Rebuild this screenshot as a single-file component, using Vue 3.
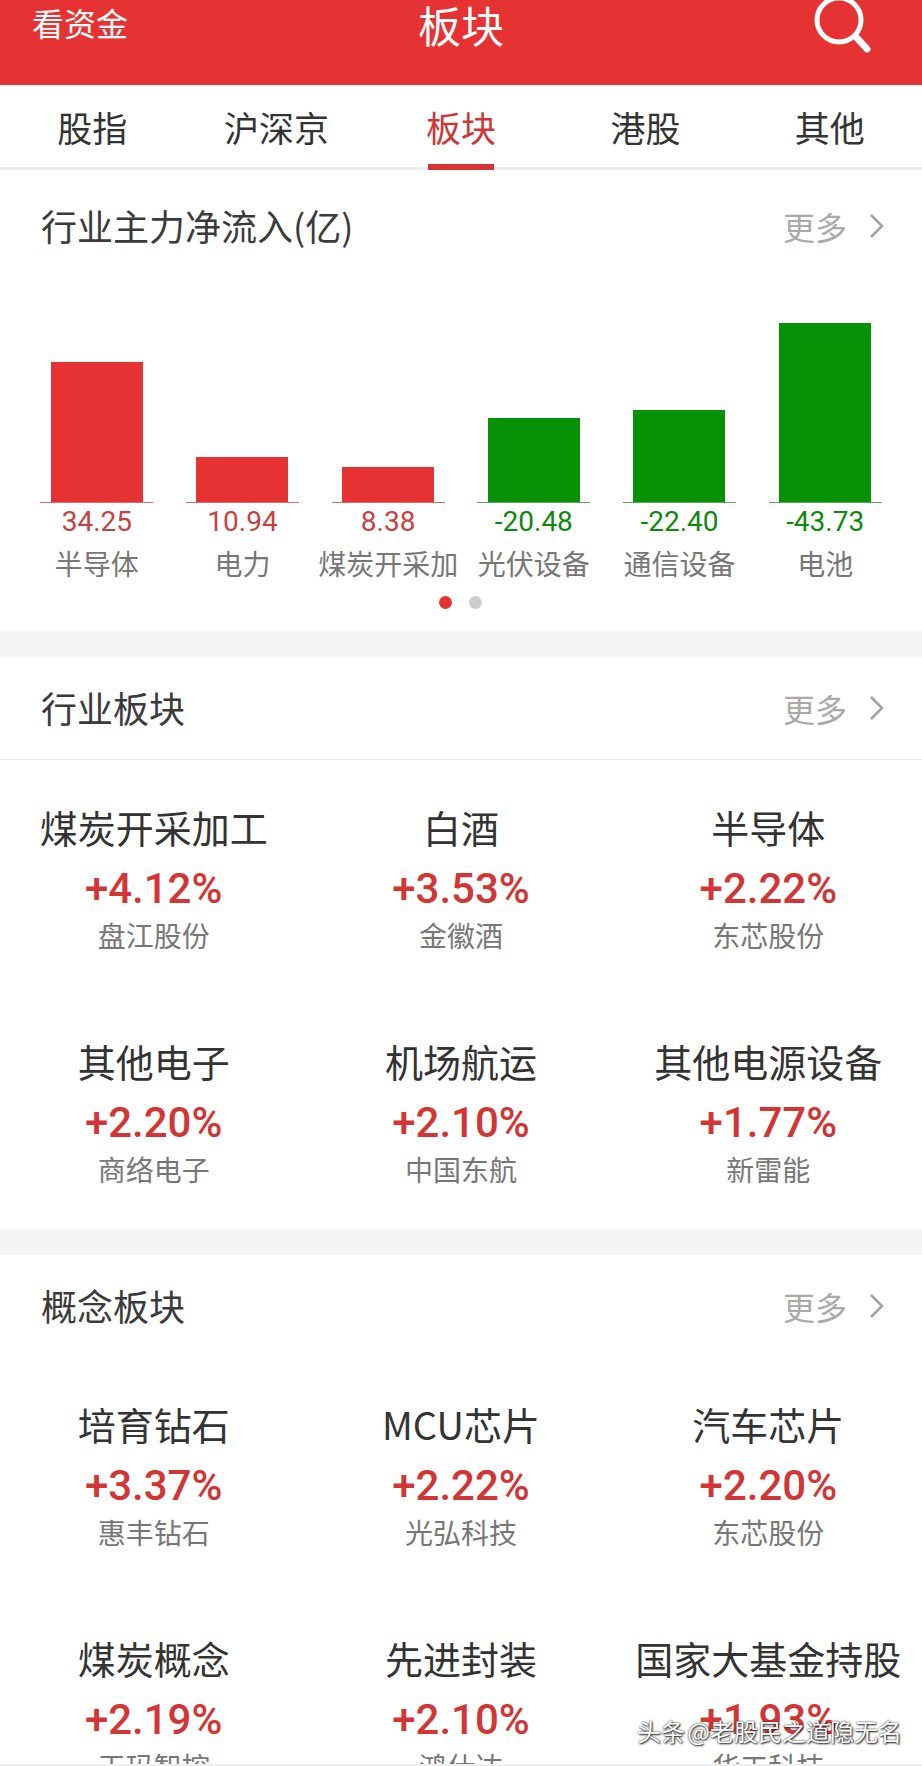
<template>
  <div class="page">
    <header class="top-bar">
      <span class="top-link">看资金</span>
      <span class="top-title">板块</span>
      <svg class="search" viewBox="0 0 56 56" fill="none" stroke="#fff" stroke-linecap="round">
        <circle cx="25" cy="24" r="22" stroke-width="5" />
        <path d="M43 42 L53 53" stroke-width="7" />
      </svg>
    </header>

    <nav class="tabs">
      <div v-for="t in tabs" :key="t" class="tab" :class="{ active: t === '板块' }">{{ t }}</div>
    </nav>

    <section class="section flow-section">
      <div class="sec-head">
        <span class="sec-title">行业主力净流入(亿)</span>
        <span class="more">更多<svg class="chev" viewBox="0 0 15 24" fill="none" stroke="#a3a3a3" stroke-width="2.6"><path d="M2 1 L13 12 L2 23" /></svg></span>
      </div>
      <div class="chart">
        <div v-for="b in flows" :key="b.name" class="col" :class="b.value > 0 ? 'up' : 'down'">
          <div class="bar-area">
            <div class="bar" :style="{ height: b.h + 'px' }"></div>
          </div>
          <div class="val">{{ b.value.toFixed(2) }}</div>
          <div class="col-name">{{ b.name }}</div>
        </div>
      </div>
      <div class="dots">
        <span class="dot on"></span>
        <span class="dot"></span>
      </div>
    </section>

    <section class="section">
      <div class="sec-head ruled">
        <span class="sec-title">行业板块</span>
        <span class="more">更多<svg class="chev" viewBox="0 0 15 24" fill="none" stroke="#a3a3a3" stroke-width="2.6"><path d="M2 1 L13 12 L2 23" /></svg></span>
      </div>
      <div class="grid">
        <div v-for="c in industry" :key="c.name" class="cell">
          <div class="cell-name">{{ c.name }}</div>
          <div class="cell-pct">{{ c.pct }}</div>
          <div class="cell-stock">{{ c.stock }}</div>
        </div>
      </div>
    </section>

    <section class="section">
      <div class="sec-head">
        <span class="sec-title">概念板块</span>
        <span class="more">更多<svg class="chev" viewBox="0 0 15 24" fill="none" stroke="#a3a3a3" stroke-width="2.6"><path d="M2 1 L13 12 L2 23" /></svg></span>
      </div>
      <div class="grid">
        <div v-for="c in concept" :key="c.name" class="cell">
          <div class="cell-name">{{ c.name }}</div>
          <div class="cell-pct">{{ c.pct }}</div>
          <div class="cell-stock">{{ c.stock }}</div>
        </div>
      </div>
    </section>

    <div class="bottom-line"></div>
    <div class="watermark">头条 @老股民之道隐无名</div>
  </div>
</template>

<script setup>
const tabs = ['股指', '沪深京', '板块', '港股', '其他']

const flows = [
  { name: '半导体', value: 34.25, h: 140 },
  { name: '电力', value: 10.94, h: 45 },
  { name: '煤炭开采加', value: 8.38, h: 35 },
  { name: '光伏设备', value: -20.48, h: 84 },
  { name: '通信设备', value: -22.4, h: 92 },
  { name: '电池', value: -43.73, h: 179 }
]

const industry = [
  { name: '煤炭开采加工', pct: '+4.12%', stock: '盘江股份' },
  { name: '白酒', pct: '+3.53%', stock: '金徽酒' },
  { name: '半导体', pct: '+2.22%', stock: '东芯股份' },
  { name: '其他电子', pct: '+2.20%', stock: '商络电子' },
  { name: '机场航运', pct: '+2.10%', stock: '中国东航' },
  { name: '其他电源设备', pct: '+1.77%', stock: '新雷能' }
]

const concept = [
  { name: '培育钻石', pct: '+3.37%', stock: '惠丰钻石' },
  { name: 'MCU芯片', pct: '+2.22%', stock: '光弘科技' },
  { name: '汽车芯片', pct: '+2.20%', stock: '东芯股份' },
  { name: '煤炭概念', pct: '+2.19%', stock: '天玛智控' },
  { name: '先进封装', pct: '+2.10%', stock: '鸿仕达' },
  { name: '国家大基金持股', pct: '+1.93%', stock: '华工科技' }
]
</script>

<style>
html, body {
  margin: 0;
  background: #fff;
}
</style>

<style scoped>
.page {
  position: relative;
  width: 922px;
  height: 1766px;
  overflow: hidden;
  background: #f5f5f5;
  font-family: "Noto Sans CJK SC", "Noto Sans", sans-serif;
  color: #333;
}

.top-bar {
  height: 85px;
  box-sizing: border-box;
  padding: 0 32px 35px;
  background: #e63232;
  color: #fff;
  display: grid;
  grid-template-columns: 1fr auto 1fr;
  align-items: center;
}

.top-link { font-size: 32px; line-height: 50px; margin-top: -9px; }
.top-title { font-size: 43px; line-height: 50px; margin-top: -4px; }

.search {
  width: 56px;
  height: 56px;
  justify-self: end;
  margin-top: -4px;
  margin-right: 20px;
  overflow: visible;
}

.tabs {
  height: 85px;
  box-sizing: border-box;
  background: #fff;
  border-bottom: 3px solid #ededed;
  display: grid;
  grid-template-columns: repeat(5, 1fr);
}

.tab {
  position: relative;
  height: 82px;
  font-size: 35px;
  line-height: 84px;
  text-align: center;
}

.tab.active { color: #d03535; }

.tab.active::after {
  content: '';
  position: absolute;
  left: 50%;
  bottom: -3px;
  width: 66px;
  height: 6px;
  margin-left: -33px;
  background: #d63434;
}

.section {
  background: #fff;
  margin-bottom: 26px;
}

.flow-section { padding-top: 5px; }

.sec-head {
  height: 102px;
  box-sizing: border-box;
  padding: 0 38px 0 41px;
  display: flex;
  align-items: center;
  justify-content: space-between;
}

.sec-head.ruled { border-bottom: 1px solid #eaeaea; height: 103px; }

.sec-title {
  font-size: 36px;
  color: #3a3a3a;
  margin-top: -3px;
}

.more {
  display: flex;
  align-items: center;
  font-size: 32px;
  color: #aaa;
}

.chev {
  width: 15px;
  height: 24px;
  margin-left: 22px;
}

.chart {
  display: grid;
  grid-template-columns: repeat(6, 1fr);
  padding: 0 24px;
}

.col {
  display: flex;
  flex-direction: column;
  align-items: center;
}

.bar-area {
  width: 113px;
  height: 225px;
  display: flex;
  align-items: flex-end;
  justify-content: center;
  border-bottom: 1px solid;
}

.bar { width: 92px; }

.up .bar { background: #e63232; }
.down .bar { background: #069106; }
.up .bar-area { border-color: #d86a6a; }
.down .bar-area { border-color: #5aa85a; }

.val {
  font-family: Roboto, sans-serif;
  font-size: 28px;
  line-height: 38px;
  margin-top: 0;
}

.up .val { color: #c8403f; }
.down .val { color: #0d8a0d; }

.col-name {
  font-size: 28px;
  line-height: 44px;
  margin-top: 0;
  color: #777;
  white-space: nowrap;
}

.dots {
  display: flex;
  justify-content: center;
  gap: 17px;
  height: 13px;
  margin-left: -1px;
  padding: 11px 0 22px;
}

.dot {
  width: 13px;
  height: 13px;
  border-radius: 50%;
  background: #ccc;
}

.dot.on { background: #e63232; }

.grid {
  display: grid;
  grid-template-columns: repeat(3, 1fr);
  row-gap: 83px;
  padding: 41px 0 43px;
}

.cell {
  text-align: center;
  white-space: nowrap;
}

.cell-name {
  font-size: 38px;
  line-height: 52px;
  color: #333;
}

.cell-pct {
  font-family: Roboto, sans-serif;
  font-weight: 500;
  font-size: 42px;
  line-height: 46px;
  margin-top: 13px;
  color: #d23535;
}

.cell-stock {
  font-size: 28px;
  line-height: 34px;
  margin-top: 6px;
  color: #777;
}

.bottom-line {
  position: absolute;
  left: 0;
  right: 0;
  bottom: 0;
  height: 2px;
  background: #efefef;
}

.watermark {
  position: absolute;
  right: 20px;
  top: 1713px;
  font-size: 24px;
  line-height: 36px;
  word-spacing: -3px;
  color: #fff;
  white-space: nowrap;
  text-shadow: 0 0 2px #222, 1px 1px 2px #222;
}
</style>
